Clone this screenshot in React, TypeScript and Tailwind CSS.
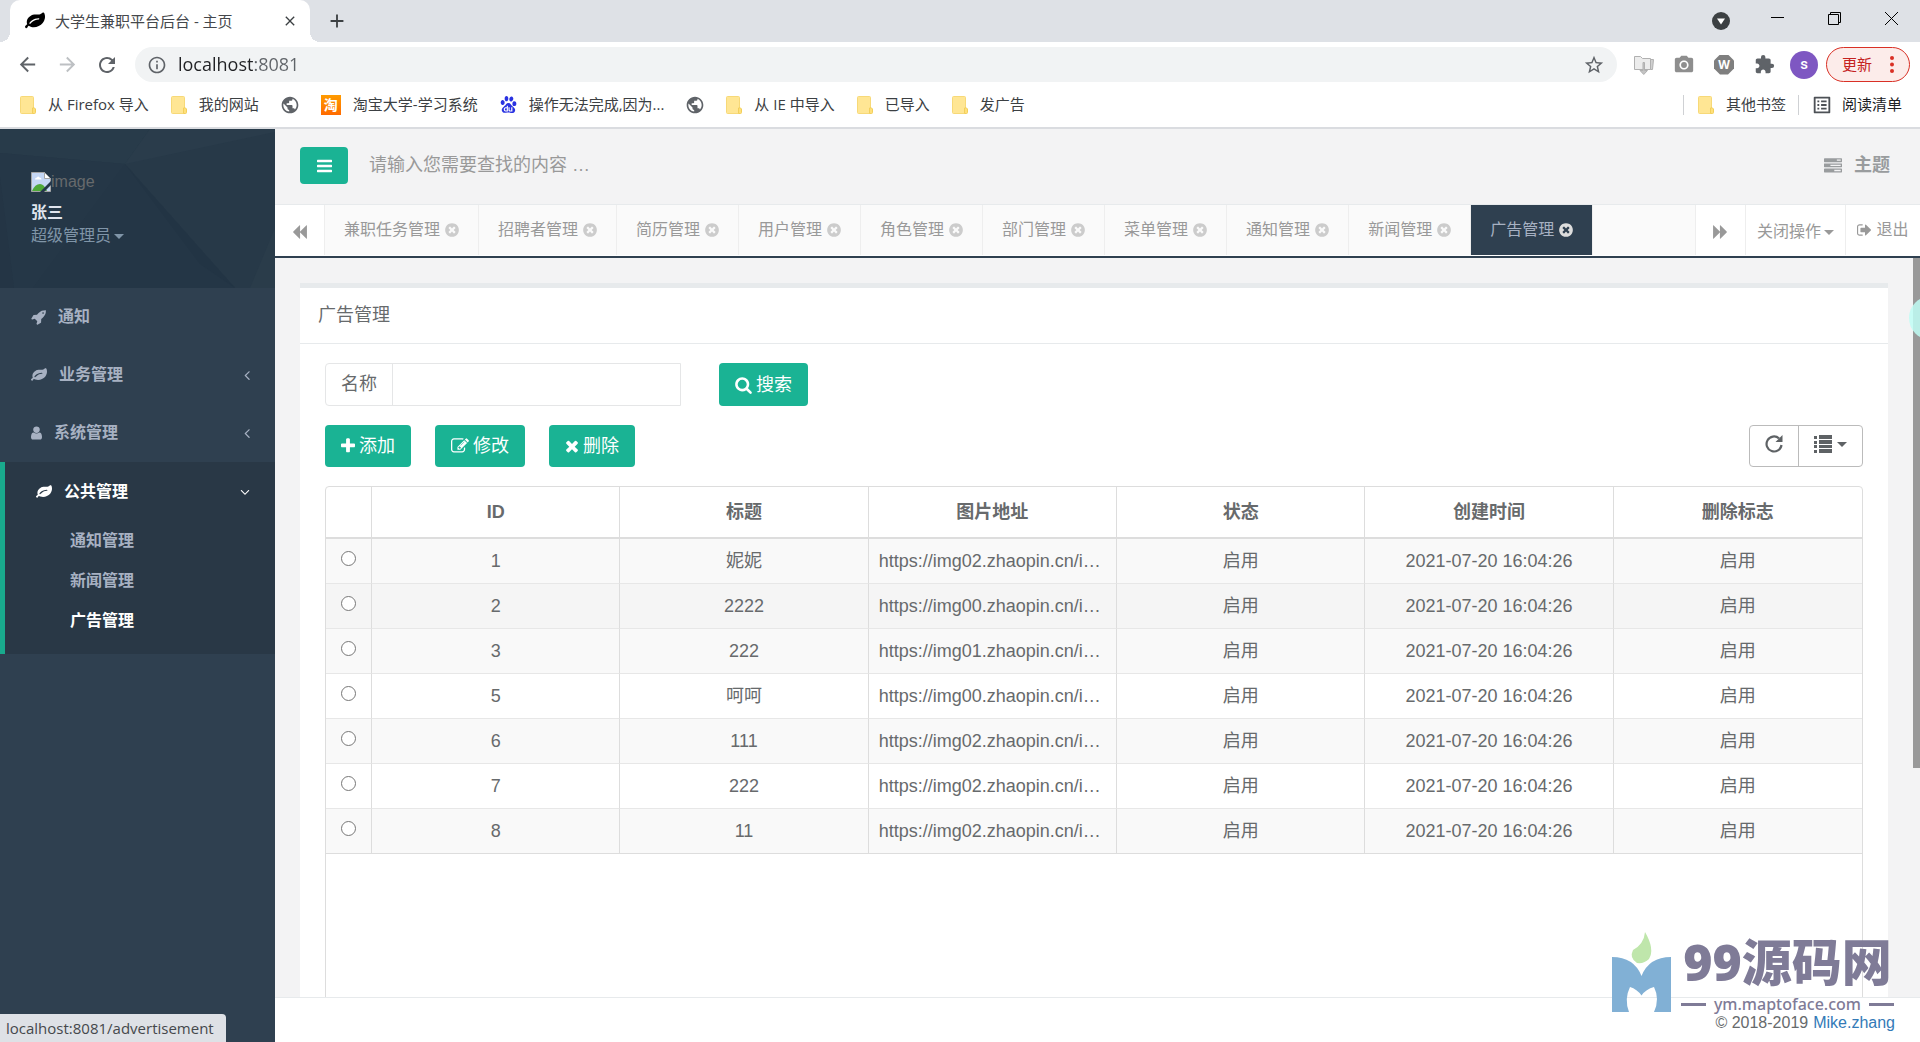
import type { ReactNode } from 'react'
import {
  MdAdd,
  MdArrowBack,
  MdArrowForward,
  MdClose,
  MdExtension,
  MdInfoOutline,
  MdListAlt,
  MdPhotoCamera,
  MdPublic,
  MdRefresh,
  MdStarBorder,
} from 'react-icons/md'
import { SiBaidu } from 'react-icons/si'

// Font Awesome 4 glyphs: [advance width, outline], y axis pointing up
const GLYPHS = {
  leaf: [1792, 'M1280 832q0 26 -19 45t-45 19q-172 0 -318 -49.5t-259.5 -134t-235.5 -219.5q-19 -21 -19 -45q0 -26 19 -45t45 -19q24 0 45 19q27 24 74 71t67 66q137 124 268.5 176t313.5 52q26 0 45 19t19 45zM1792 1030q0 -95 -20 -193q-46 -224 -184.5 -383t-357.5 -268q-214 -108 -438 -108q-148 0 -286 47q-15 5 -88 42t-96 37q-16 0 -39.5 -32t-45 -70t-52.5 -70t-60 -32q-43 0 -63.5 17.5t-45.5 59.5q-2 4 -6 11t-5.5 10t-3 9.5t-1.5 13.5q0 35 31 73.5t68 65.5t68 56t31 48q0 4 -14 38t-16 44q-9 51 -9 104q0 115 43.5 220t119 184.5t170.5 139t204 95.5q55 18 145 25.5t179.5 9t178.5 6t163.5 24t113.5 56.5l29.5 29.5t29.5 28t27 20t36.5 16t43.5 4.5q39 0 70.5 -46t47.5 -112t24 -124t8 -96z'],
  rocket: [1664, 'M1440 1088q0 40 -28 68t-68 28t-68 -28t-28 -68t28 -68t68 -28t68 28t28 68zM1664 1376q0 -249 -75.5 -430.5t-253.5 -360.5q-81 -80 -195 -176l-20 -379q-2 -16 -16 -26l-384 -224q-7 -4 -16 -4q-12 0 -23 9l-64 64q-13 14 -8 32l85 276l-281 281l-276 -85q-3 -1 -9 -1q-14 0 -23 9l-64 64q-17 19 -5 39l224 384q10 14 26 16l379 20q96 114 176 195q188 187 358 258t431 71q14 0 24 -9.5t10 -22.5z'],
  user: [1280, 'M1280 137q0 -109 -62.5 -187t-150.5 -78h-854q-88 0 -150.5 78t-62.5 187q0 85 8.5 160.5t31.5 152t58.5 131t94 89t134.5 34.5q131 -128 313 -128t313 128q76 0 134.5 -34.5t94 -89t58.5 -131t31.5 -152t8.5 -160.5zM1024 1024q0 -159 -112.5 -271.5t-271.5 -112.5t-271.5 112.5t-112.5 271.5t112.5 271.5t271.5 112.5t271.5 -112.5t112.5 -271.5z'],
  bars: [1536, 'M1536 192v-128q0 -26 -19 -45t-45 -19h-1408q-26 0 -45 19t-19 45v128q0 26 19 45t45 19h1408q26 0 45 -19t19 -45zM1536 704v-128q0 -26 -19 -45t-45 -19h-1408q-26 0 -45 19t-19 45v128q0 26 19 45t45 19h1408q26 0 45 -19t19 -45zM1536 1216v-128q0 -26 -19 -45t-45 -19h-1408q-26 0 -45 19t-19 45v128q0 26 19 45t45 19h1408q26 0 45 -19t19 -45z'],
  tasks: [1792, 'M1024 128h640v128h-640v-128zM640 640h1024v128h-1024v-128zM1280 1152h384v128h-384v-128zM1792 320v-256q0 -26 -19 -45t-45 -19h-1664q-26 0 -45 19t-19 45v256q0 26 19 45t45 19h1664q26 0 45 -19t19 -45zM1792 832v-256q0 -26 -19 -45t-45 -19h-1664q-26 0 -45 19t-19 45v256q0 26 19 45t45 19h1664q26 0 45 -19t19 -45zM1792 1344v-256q0 -26 -19 -45t-45 -19h-1664q-26 0 -45 19t-19 45v256q0 26 19 45t45 19h1664q26 0 45 -19t19 -45z'],
  backward: [1664, 'M1619 1395q19 19 32 13t13 -32v-1472q0 -26 -13 -32t-32 13l-710 710q-9 9 -13 19v-710q0 -26 -13 -32t-32 13l-710 710q-19 19 -19 45t19 45l710 710q19 19 32 13t13 -32v-710q4 11 13 19z'],
  forward: [1664, 'M45 -115q-19 -19 -32 -13t-13 32v1472q0 26 13 32t32 -13l710 -710q9 -9 13 -19v710q0 26 13 32t32 -13l710 -710q19 -19 19 -45t-19 -45l-710 -710q-19 -19 -32 -13t-13 32v710q-4 -10 -13 -19z'],
  timesCircle: [1536, 'M1149 414q0 26 -19 45l-181 181l181 181q19 19 19 45q0 27 -19 46l-90 90q-19 19 -46 19q-26 0 -45 -19l-181 -181l-181 181q-19 19 -45 19q-27 0 -46 -19l-90 -90q-19 -19 -19 -46q0 -26 19 -45l181 -181l-181 -181q-19 -19 -19 -45q0 -27 19 -46l90 -90q19 -19 46 -19q26 0 45 19l181 181l181 -181q19 -19 45 -19q27 0 46 19l90 90q19 19 19 46zM1536 640q0 -209 -103 -385.5t-279.5 -279.5t-385.5 -103t-385.5 103t-279.5 279.5t-103 385.5t103 385.5t279.5 279.5t385.5 103t385.5 -103t279.5 -279.5t103 -385.5z'],
  signOut: [1568, 'M640 96q0 -4 1 -20t0.5 -26.5t-3 -23.5t-10 -19.5t-20.5 -6.5h-320q-119 0 -203.5 84.5t-84.5 203.5v704q0 119 84.5 203.5t203.5 84.5h320q13 0 22.5 -9.5t9.5 -22.5q0 -4 1 -20t0.5 -26.5t-3 -23.5t-10 -19.5t-20.5 -6.5h-320q-66 0 -113 -47t-47 -113v-704q0 -66 47 -113t113 -47h288h11h13t11.5 -1t11.5 -3t8 -5.5t7 -9t2 -13.5zM1568 640q0 -26 -19 -45l-544 -544q-19 -19 -45 -19t-45 19t-19 45v288h-448q-26 0 -45 19t-19 45v384q0 26 19 45t45 19h448v288q0 26 19 45t45 19t45 -19l544 -544q19 -19 19 -45z'],
  search: [1664, 'M1152 704q0 185 -131.5 316.5t-316.5 131.5t-316.5 -131.5t-131.5 -316.5t131.5 -316.5t316.5 -131.5t316.5 131.5t131.5 316.5zM1664 -128q0 -52 -38 -90t-90 -38q-54 0 -90 38l-343 342q-179 -124 -399 -124q-143 0 -273.5 55.5t-225 150t-150 225t-55.5 273.5t55.5 273.5t150 225t225 150t273.5 55.5t273.5 -55.5t225 -150t150 -225t55.5 -273.5q0 -220 -124 -399l343 -343q37 -37 37 -90z'],
  plus: [1408, 'M1408 800v-192q0 -40 -28 -68t-68 -28h-416v-416q0 -40 -28 -68t-68 -28h-192q-40 0 -68 28t-28 68v416h-416q-40 0 -68 28t-28 68v192q0 40 28 68t68 28h416v416q0 40 28 68t68 28h192q40 0 68 -28t28 -68v-416h416q40 0 68 -28t28 -68z'],
  edit: [1792, 'M888 352l116 116l-152 152l-116 -116v-56h96v-96h56zM1328 1072q-16 16 -33 -1l-350 -350q-17 -17 -1 -33t33 1l350 350q17 17 1 33zM1408 478v-190q0 -119 -84.5 -203.5t-203.5 -84.5h-832q-119 0 -203.5 84.5t-84.5 203.5v832q0 119 84.5 203.5t203.5 84.5h832q63 0 117 -25q15 -7 18 -23q3 -17 -9 -29l-49 -49q-14 -14 -32 -8q-23 6 -45 6h-832q-66 0 -113 -47t-47 -113v-832q0 -66 47 -113t113 -47h832q66 0 113 47t47 113v126q0 13 9 22l64 64q15 15 35 7t20 -29zM1312 1216l288 -288l-672 -672h-288v288zM1756 1084l-92 -92l-288 288l92 92q28 28 68 28t68 -28l152 -152q28 -28 28 -68t-28 -68z'],
  times: [1408, 'M1298 214q0 -40 -28 -68l-136 -136q-28 -28 -68 -28t-68 28l-294 294l-294 -294q-28 -28 -68 -28t-68 28l-136 136q-28 28 -28 68t28 68l294 294l-294 294q-28 28 -28 68t28 68l136 136q28 28 68 28t68 -28l294 -294l294 294q28 28 68 28t68 -28l136 -136q28 -28 28 -68t-28 -68l-294 -294l294 -294q28 -28 28 -68z'],
  angleLeft: [627, 'M627 992q0 -13 -10 -23l-393 -393l393 -393q10 -10 10 -23t-10 -23l-50 -50q-10 -10 -23 -10t-23 10l-466 466q-10 10 -10 23t10 23l466 466q10 10 23 10t23 -10l50 -50q10 -10 10 -23z'],
  angleDown: [1152, 'M1075 800q0 -13 -10 -23l-466 -466q-10 -10 -23 -10t-23 10l-466 466q-10 10 -10 23t10 23l50 50q10 10 23 10t23 -10l393 -393l393 393q10 10 23 10t23 -10l50 -50q10 -10 10 -23z'],
} as const

type GlyphName = keyof typeof GLYPHS

function Fa({ name, size = 16, className = '' }: { name: GlyphName; size?: number; className?: string }) {
  const [width, d] = GLYPHS[name]
  return (
    <svg
      aria-hidden="true"
      className={`shrink-0 ${className}`}
      width={Math.round((size * width) / 1792)}
      height={size}
      viewBox={`0 0 ${width} 1792`}
      fill="currentColor"
    >
      <path transform="matrix(1 0 0 -1 0 1536)" d={d} />
    </svg>
  )
}

function Caret() {
  return (
    <svg aria-hidden="true" className="shrink-0" width="10" height="5" viewBox="0 0 10 5" fill="currentColor">
      <path d="M0 0h10L5 5z" />
    </svg>
  )
}

function FolderIcon() {
  return (
    <svg aria-hidden="true" className="shrink-0" width="16" height="18" viewBox="0 0 16 18">
      <path d="M1.5.5h11a1 1 0 0 1 1 1v15a1 1 0 0 1-1 1h-11a1 1 0 0 1-1-1v-15a1 1 0 0 1 1-1z" fill="#ffe694" stroke="#f7d978" />
      <path d="M12.500 12v5.500h2a1 1 0 0 0 1-1v-3.500q-1-2-3-1z" fill="#ffe07a" stroke="#f2cf5c" />
    </svg>
  )
}

const BOOKMARKS: { icon: ReactNode; label?: string }[] = [
  { icon: <FolderIcon />, label: '从 Firefox 导入' },
  { icon: <FolderIcon />, label: '我的网站' },
  { icon: <MdPublic size={20} className="-mx-px text-[#5f6368]" /> },
  {
    icon: (
      <span className="flex h-5 w-5 items-center justify-center bg-linear-to-b from-[#ff9b00] to-[#ff6a00] text-[14px] leading-none font-bold text-white">
        淘
      </span>
    ),
    label: '淘宝大学-学习系统',
  },
  { icon: <SiBaidu size={17} className="text-[#2932e1]" />, label: '操作无法完成,因为...' },
  { icon: <MdPublic size={20} className="-mx-px text-[#5f6368]" /> },
  { icon: <FolderIcon />, label: '从 IE 中导入' },
  { icon: <FolderIcon />, label: '已导入' },
  { icon: <FolderIcon />, label: '发广告' },
]

function TitleBar() {
  return (
    <div className="flex h-[42px] bg-[#dee1e6]">
      <div className="relative ml-[10px] flex w-[300px] items-center rounded-t-[10px] bg-white pr-3 pl-[15px] before:absolute before:bottom-0 before:-left-[10px] before:h-[10px] before:w-[10px] before:bg-[radial-gradient(circle_at_0_0,#dee1e6_10px,#fff_10px)] after:absolute after:-right-[10px] after:bottom-0 after:h-[10px] after:w-[10px] after:bg-[radial-gradient(circle_at_100%_0,#dee1e6_10px,#fff_10px)]">
        <Fa name="leaf" size={20} className="text-black" />
        <span className="ml-[10px] flex-1 text-[15px] text-[#45484c]">大学生兼职平台后台 - 主页</span>
        <button aria-label="关闭标签页" className="text-[#3c4043]">
          <MdClose size={16} />
        </button>
      </div>
      <button aria-label="新标签页" className="ml-4 text-[#3c4043]">
        <MdAdd size={22} />
      </button>
      <div className="ml-auto flex text-black">
        <button aria-label="搜索标签页" className="flex w-[57px] items-center justify-center">
          <svg width="18" height="18" viewBox="0 0 18 18">
            <circle cx="9" cy="9" r="9" fill="#3c4043" />
            <path d="M5 6.500h8l-4 6z" fill="#fff" />
          </svg>
        </button>
        <button aria-label="最小化" className="flex w-[57px] justify-center pt-3">
          <svg width="13" height="13" viewBox="0 0 13 13" stroke="currentColor">
            <path d="M0 5.500h13" />
          </svg>
        </button>
        <button aria-label="还原" className="flex w-[57px] justify-center pt-3">
          <svg width="13" height="13" viewBox="0 0 13 13" fill="none" stroke="currentColor">
            <path d="M.5 2.500h10v10H.5zM2.500 2.500v-2h10v10h-2" />
          </svg>
        </button>
        <button aria-label="关闭" className="flex w-[57px] justify-center pt-3">
          <svg width="13" height="13" viewBox="0 0 13 13" stroke="currentColor">
            <path d="M0 0l13 13M13 0L0 13" />
          </svg>
        </button>
      </div>
    </div>
  )
}

function Toolbar() {
  return (
    <div className="flex items-center pt-[5px] pr-[10px] pl-[7px] text-[#5f6368]">
      <button aria-label="后退" className="flex w-10 justify-center">
        <MdArrowBack size={23} />
      </button>
      <button aria-label="前进" className="flex w-10 justify-center text-[#bdc0c3]">
        <MdArrowForward size={23} />
      </button>
      <button aria-label="重新加载" className="flex w-10 justify-center">
        <MdRefresh size={24} />
      </button>
      <div className="ml-2 flex h-[35px] flex-1 items-center rounded-full bg-[#f1f3f4] pr-3 pl-3">
        <MdInfoOutline size={20} />
        <input
          aria-label="地址"
          defaultValue="localhost:8081"
          className="ml-[11px] flex-1 bg-[linear-gradient(to_right,#202124_76px,#5f6368_76px)] bg-clip-text pb-[2px] text-[18px] leading-6 text-transparent outline-none"
        />
        <button aria-label="收藏">
          <MdStarBorder size={22} />
        </button>
      </div>
      <div className="ml-[7px] flex">
        <button aria-label="下载扩展" className="flex w-10 items-center justify-center">
          <svg width="20" height="20" viewBox="0 0 20 20" fill="#ececec" stroke="#b0b0b0">
            <path d="M.5 1.500h6l2 2h8v11H.5z" />
            <path d="M16.500 4.500h3l-1 10h-2z" fill="#d0d0d0" />
            <path d="M9 7.500h1.500v8h3L9.750 19.500 6 15.500h3z" fill="#c4c4c4" />
          </svg>
        </button>
        <button aria-label="截图扩展" className="flex w-10 items-center justify-center text-[#8e8e8e]">
          <MdPhotoCamera size={22} />
        </button>
        <button aria-label="W 扩展" className="flex w-10 items-center justify-center">
          <span className="flex h-5 w-5 items-center justify-center bg-[#7f7f7f] text-[12px] leading-none font-bold text-white [clip-path:polygon(30%_0,70%_0,100%_30%,100%_70%,70%_100%,30%_100%,0_70%,0_30%)]">
            W
          </span>
        </button>
        <button aria-label="扩展程序" className="flex w-10 items-center justify-center">
          <MdExtension size={21} />
        </button>
        <button aria-label="用户" className="flex w-10 items-center justify-center">
          <span className="flex h-7 w-7 items-center justify-center rounded-full bg-[#7e57c2] font-['Roboto'] text-[15px] font-medium text-white">
            s
          </span>
        </button>
      </div>
      <button className="ml-[2px] flex h-[35px] w-[84px] items-center rounded-full border border-[#d93025] bg-[#fcecea] pl-[15px] text-[15px] text-[#c5221f]">
        更新
        <svg className="ml-[18px]" width="4" height="17" viewBox="0 0 4 17" fill="#d93025">
          <circle cx="2" cy="2" r="2" />
          <circle cx="2" cy="8.500" r="2" />
          <circle cx="2" cy="15" r="2" />
        </svg>
      </button>
    </div>
  )
}

function BookmarksBar() {
  return (
    <div className="flex h-[47px] items-center gap-[22px] border-b-2 border-[#dadce0] pr-[18px] pl-5 text-[15px] text-[#3c4043]">
      {BOOKMARKS.map((b, i) => (
        <button key={i} aria-label={b.label ?? '书签'} className="flex items-center gap-3 whitespace-nowrap">
          {b.icon}
          {b.label}
        </button>
      ))}
      <div className="ml-auto flex items-center gap-3 whitespace-nowrap">
        <span className="mr-[2px] h-5 w-px bg-[#cfd1d4]" />
        <button className="flex items-center gap-3">
          <FolderIcon />
          其他书签
        </button>
        <span className="h-5 w-px bg-[#cfd1d4]" />
        <button className="flex items-center gap-[9px] text-[#202124]">
          <MdListAlt size={22} className="text-[#4d5156]" />
          阅读清单
        </button>
      </div>
    </div>
  )
}

function ProfileHeader() {
  return (
    <div className="relative h-[159px] bg-[#273948] px-[31px] pt-[43px]">
      <svg aria-hidden="true" className="absolute inset-0 h-full w-full" viewBox="0 0 275 159" preserveAspectRatio="none">
        <path d="M0 0h150l-25 35L0 24z" fill="#283b4a" />
        <path d="M125 35L275 3V0H150z" fill="#2a3c4b" />
        <path d="M0 24l125 11-92 124H0z" fill="#253747" />
        <path d="M125 35l110 124H33z" fill="#243646" />
        <path d="M235 159L125 35l75 100z" fill="#223444" />
        <path d="M250 159l25-60v60z" fill="#2a3c4a" />
        <path d="M0 48l14 111H0z" fill="#243545" />
      </svg>
      <div className="relative">
        <div className="flex items-end text-[16px] leading-5 font-normal text-[#676a6c]">
          <svg aria-hidden="true" width="20" height="20" viewBox="0 0 20 20">
            <path d="M.5.5h13l6 6v13H.5z" fill="#c5d7f5" stroke="#a5a5a5" />
            <path d="M13.500.5v6h6z" fill="#fff" stroke="#a5a5a5" />
            <path d="M4 7.500q0-2 2-2 1-2 2.500 0 2 0 2 2z" fill="#fff" />
            <path d="M1 19q3-7 8-7 4 0 7 7z" fill="#4fa93a" />
            <path d="M9 20L20 9v4l-7 7z" fill="#25374a" />
          </svg>
          image
        </div>
        <div className="mt-[11px] text-[16px] leading-5 font-bold text-[#dfe4ed]">张三</div>
        <button className="mt-px flex items-center gap-[3px] text-[16px] leading-6 font-normal text-[#8095a8]">
          超级管理员
          <Caret />
        </button>
      </div>
    </div>
  )
}

const MENU: { icon: GlyphName; label: string; arrow?: boolean }[] = [
  { icon: 'rocket', label: '通知' },
  { icon: 'leaf', label: '业务管理', arrow: true },
  { icon: 'user', label: '系统管理', arrow: true },
]

const SUBMENU = ['通知管理', '新闻管理', '广告管理']

function Sidebar() {
  return (
    <nav className="w-[275px] shrink-0 bg-[#2f4050] text-[16px] font-semibold text-[#a7b1c2]">
      <ProfileHeader />
      {MENU.map((m) => (
        <a key={m.label} href="#" className="flex h-[58px] items-center gap-3 pr-[25px] pl-[31px]">
          <Fa name={m.icon} />
          {m.label}
          {m.arrow && <Fa name="angleLeft" className="ml-auto" />}
        </a>
      ))}
      <div className="border-l-[5px] border-[#19aa8d] bg-[#293846] pt-px pb-[13px]">
        <a href="#" className="flex h-[58px] items-center gap-3 pr-[25px] pl-[31px] text-white">
          <Fa name="leaf" />
          公共管理
          <Fa name="angleDown" className="ml-auto" />
        </a>
        {SUBMENU.map((s) => (
          <a
            key={s}
            href="#"
            className={`flex h-10 items-center pl-[65px] ${s === '广告管理' ? 'text-white' : ''}`}
          >
            {s}
          </a>
        ))}
      </div>
    </nav>
  )
}

const TABS = [
  '兼职任务管理',
  '招聘者管理',
  '简历管理',
  '用户管理',
  '角色管理',
  '部门管理',
  '菜单管理',
  '通知管理',
  '新闻管理',
  '广告管理',
]

function TabStrip() {
  return (
    <div className="flex h-[54px] border-t border-b-2 border-t-[#e7eaec] border-b-[#2f4050] bg-white pb-px text-[16px] text-[#999]">
      <button aria-label="向左" className="flex w-[50px] items-center justify-center border-r border-[#eee] pt-1">
        <Fa name="backward" />
      </button>
      <div className="flex flex-1 overflow-hidden bg-[#fafafa]">
        {TABS.map((t) => {
          const active = t === '广告管理'
          return (
            <div
              key={t}
              className={`flex items-center gap-[5px] border-r border-[#eee] px-[19px] whitespace-nowrap ${
                active ? 'bg-[#2f4050] text-[#a7b1c2]' : ''
              }`}
            >
              {t}
              <button aria-label={`关闭${t}`} className={active ? 'text-[#ddd]' : 'text-[#ccc]'}>
                <Fa name="timesCircle" />
              </button>
            </div>
          )
        })}
      </div>
      <button aria-label="向右" className="flex w-[50px] items-center justify-center border-l border-[#eee] pt-1">
        <Fa name="forward" />
      </button>
      <button className="flex w-[100px] items-center justify-center gap-[3px] border-l border-[#eee] pt-1">
        关闭操作
        <Caret />
      </button>
      <a href="#" className="flex w-[75px] items-center justify-center gap-[5px] border-l border-[#eee]">
        <Fa name="signOut" />
        退出
      </a>
    </div>
  )
}

const COLUMNS = ['ID', '标题', '图片地址', '状态', '创建时间', '删除标志']

const ROWS = [
  { id: 1, title: '妮妮', img: 'img02', bg: 'bg-[#f9f9f9]' },
  { id: 2, title: '2222', img: 'img00', bg: 'bg-[#f5f5f5]' },
  { id: 3, title: '222', img: 'img01', bg: 'bg-[#f9f9f9]' },
  { id: 5, title: '呵呵', img: 'img00', bg: 'bg-white' },
  { id: 6, title: '111', img: 'img02', bg: 'bg-[#f9f9f9]' },
  { id: 7, title: '222', img: 'img02', bg: 'bg-white' },
  { id: 8, title: '11', img: 'img02', bg: 'bg-[#f9f9f9]' },
]

function AdTable() {
  return (
    <div className="mt-[19px] min-h-[640px] rounded-t border border-[#ddd] text-[18px]">
      <table className="w-full table-fixed border-separate border-spacing-0 text-center">
        <thead>
          <tr className="h-[52px]">
            <th className="w-[46px] border-r border-b-2 border-[#ddd]" />
            {COLUMNS.map((c) => (
              <th key={c} className="border-r border-b-2 border-[#ddd] last:border-r-0">
                {c}
              </th>
            ))}
          </tr>
        </thead>
        <tbody className="[&>tr:last-child>td]:border-b-[#ddd] [&>tr>td]:border-r [&>tr>td]:border-b [&>tr>td]:border-r-[#ddd] [&>tr>td]:border-b-[#e7e7e7] [&>tr>td:last-child]:border-r-0">
          {ROWS.map((r) => (
            <tr key={r.id} className={`h-[45px] ${r.bg}`}>
              <td>
                <input type="radio" name="ad" aria-label={`选择 ${r.id}`} className="mx-auto mb-[5px] block h-[15px] w-[15px]" />
              </td>
              <td>{r.id}</td>
              <td>{r.title}</td>
              <td className="truncate px-[10px] text-left">https://{r.img}.zhaopin.cn/i…</td>
              <td>启用</td>
              <td>2021-07-20 16:04:26</td>
              <td>启用</td>
            </tr>
          ))}
        </tbody>
      </table>
    </div>
  )
}

function ActionButton({ icon, children }: { icon: GlyphName; children: ReactNode }) {
  return (
    <button className="flex min-h-[42px] items-center gap-1 rounded bg-[#1ab394] px-4 text-[18px] leading-6 text-white">
      <Fa name={icon} size={18} />
      {children}
    </button>
  )
}

function AdPanel() {
  return (
    <section className="border-t-[5px] border-[#e7eaec] bg-white">
      <h5 className="flex h-14 items-center border-b border-[#e7eaec] px-[18px] text-[18px]">广告管理</h5>
      <div className="px-[25px] pt-[19px]">
        <div className="flex gap-[38px]">
          <div className="flex h-[43px] w-[356px] rounded-l border border-[#e5e6e7] text-[18px]">
            <label htmlFor="ad-name" className="flex items-center border-r border-[#e5e6e7] px-[15px]">
              名称
            </label>
            <input id="ad-name" type="text" className="min-w-0 flex-1 px-3 outline-none" />
          </div>
          <ActionButton icon="search">搜索</ActionButton>
        </div>
        <div className="mt-[19px] flex gap-6">
          <ActionButton icon="plus">添加</ActionButton>
          <ActionButton icon="edit">修改</ActionButton>
          <ActionButton icon="times">删除</ActionButton>
          <div className="ml-auto flex rounded border border-[#bbb] text-[#5e6265]">
            <button aria-label="刷新" className="flex w-12 items-center justify-center pb-1">
              <svg width="18" height="18" viewBox="0 0 18 18" fill="none">
                <path d="M14 3.300A7.500 7.500 0 1 0 16.500 10" stroke="currentColor" strokeWidth="2.200" />
                <path d="M17.500 0v7h-7z" fill="currentColor" />
              </svg>
            </button>
            <button
              aria-label="列"
              className="flex w-16 items-center justify-center gap-[5px] border-l border-[#bbb] pb-1"
            >
              <svg width="18" height="18" viewBox="0 0 18 18" fill="currentColor">
                <path d="M0 1h3v3H0zM0 6h3v3H0zM0 10h3v3H0zM0 15h3v3H0zM5 0h13v4H5zM5 5h13v4H5zM5 10h13v3H5zM5 14h13v4H5z" />
              </svg>
              <Caret />
            </button>
          </div>
        </div>
        <AdTable />
      </div>
    </section>
  )
}

function Watermark() {
  return (
    <div className="pointer-events-none absolute right-[26px] bottom-7 flex items-end gap-[10px] text-[#7f7b97]">
      <svg aria-hidden="true" className="mb-[2px]" width="59" height="80" viewBox="0 0 59 80">
        <path d="M33 0q10 17 4 27-5 5-12 4-8-5-4-13Q32 12 33 0z" fill="#bfe6ab" />
        <path
          d="M0 25q22 0 29.500 19Q37 25 59 25v55H42q6-13 0-25-8 2-12.500 8.500Q25 57 18 55q-6 12-1 25H0z"
          fill="#81b0d5"
        />
      </svg>
      <div className="flex flex-col items-center">
        <div className="text-[50px] leading-[64px] font-black">99源码网</div>
        <div className="flex items-center gap-2 text-[16px] leading-5 font-medium">
          <span className="h-[3px] w-[25px] bg-[#7f7b97]" />
          <span className="font-['Noto_Sans']">ym.maptoface.com</span>
          <span className="h-[3px] w-[25px] bg-[#7f7b97]" />
        </div>
      </div>
    </div>
  )
}

export default function App() {
  return (
    <div className="relative flex h-screen flex-col overflow-hidden bg-white font-['Open_Sans','Noto_Sans_CJK_SC',sans-serif]">
      <header>
        <TitleBar />
        <Toolbar />
        <BookmarksBar />
      </header>
      <div className="flex min-h-0 flex-1 font-['Liberation_Sans','Noto_Sans_CJK_SC',sans-serif] text-[#676a6c]">
        <Sidebar />
        <div className="flex min-w-0 flex-1 flex-col bg-[#f3f3f4]">
          <div className="flex h-[75px] items-center pr-[30px] pb-[2px] pl-[25px]">
            <button aria-label="菜单" className="flex h-[37px] w-12 items-center justify-center rounded bg-[#1ab394] text-white">
              <Fa name="bars" size={18} />
            </button>
            <input
              type="text"
              aria-label="查找"
              placeholder="请输入您需要查找的内容 …"
              className="ml-[21px] w-[300px] text-[18px] outline-none placeholder:text-[#999]"
            />
            <a href="#" className="ml-auto flex items-center gap-3 text-[18px] font-bold text-[#999c9e]">
              <Fa name="tasks" size={18} />
              主题
            </a>
          </div>
          <TabStrip />
          <div className="flex min-h-0 flex-1">
            <main className="min-w-0 flex-1 overflow-hidden px-[25px] pt-[25px]">
              <AdPanel />
            </main>
            <div className="w-[7px]">
              <div className="h-[69%] bg-[#999]" />
            </div>
          </div>
          <footer className="flex h-[45px] items-center justify-end gap-[5px] border-t border-[#e7eaec] bg-white pt-[6px] pr-[25px] text-[16px] leading-4">
            © 2018-2019
            <a href="#" className="text-[#337ab7]">
              Mike.zhang
            </a>
          </footer>
        </div>
      </div>
      <div className="absolute top-[296px] -right-[33px] h-11 w-11 rounded-full bg-[#c0fdf5]/85" />
      <Watermark />
      <div className="absolute bottom-0 left-0 flex h-7 items-center rounded-tr bg-[#dee1e6] pr-3 pl-[6px] text-[15px] text-[#45484c]">
        localhost:8081/advertisement
      </div>
    </div>
  )
}
